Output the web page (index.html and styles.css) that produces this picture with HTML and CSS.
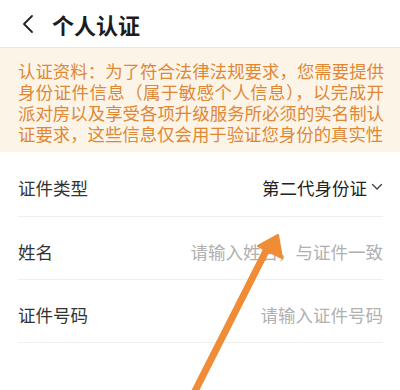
FILE: index.html
```html
<!DOCTYPE html>
<html lang="zh">
<head>
<meta charset="utf-8">
<link rel="stylesheet" href="styles.css">
</head>
<body>
<div class="page">
  <header class="topbar">
    <svg class="back" width="14" height="20" viewBox="0 0 14 20"><path d="M11 2 L3 10 L11 18" fill="none" stroke="#222" stroke-width="1.8" stroke-linecap="round" stroke-linejoin="round"/></svg>
    <h1 class="title">个人认证</h1>
  </header>
  <div class="notice">认证资料：为了符合法律法规要求，您需要提供身份证件信息（属于敏感个人信息），以完成开派对房以及享受各项升级服务所必须的实名制认证要求，这些信息仅会用于验证您身份的真实性</div>
  <div class="form">
    <div class="row">
      <span class="label">证件类型</span>
      <span class="value">第二代身份证<svg class="caret" width="12" height="8" viewBox="0 0 12 8"><path d="M1.5 1.5 L6 6 L10.5 1.5" fill="none" stroke="#444" stroke-width="1.4" stroke-linecap="round" stroke-linejoin="round"/></svg></span>
    </div>
    <div class="row">
      <span class="label">姓名</span>
      <span class="placeholder">请输入姓名，与证件一致</span>
    </div>
    <div class="row">
      <span class="label">证件号码</span>
      <span class="placeholder">请输入证件号码</span>
    </div>
  </div>
  <svg class="arrow" width="400" height="390" viewBox="0 0 400 390">
    <path d="M193 395 L268 247" stroke="#f08c36" stroke-width="7" stroke-linecap="round" fill="none"/>
    <path d="M278 235 L258 246 L282 258 Z" fill="#f08c36" stroke="#f08c36" stroke-width="2" stroke-linejoin="round"/>
  </svg>
</div>
</body>
</html>
```
FILE: styles.css
```css
html, body {
  margin: 0;
  padding: 0;
  background: #ffffff;
}
body {
  font-family: "Noto Sans CJK SC", "Noto Sans", sans-serif;
}
.page {
  position: relative;
  width: 400px;
  height: 390px;
  overflow: hidden;
}
.topbar {
  height: 48px;
  display: flex;
  align-items: center;
  padding-left: 21px;
  border-bottom: 1px solid #ede7df;
  box-sizing: border-box;
}
.back {
  display: block;
}
.title {
  margin: 0 0 0 17px;
  font-size: 22px;
  font-weight: 700;
  color: #1c1c1c;
  line-height: 1;
}
.notice {
  background: #fdf4e8;
  color: #de8836;
  font-size: 17.4px;
  line-height: 21px;
  padding: 12px 16px 8px 18px;
  text-align: justify;
}
.form {
  padding: 0 17px 0 18px;
}
.row {
  height: 63px;
  display: flex;
  align-items: center;
  justify-content: space-between;
  border-bottom: 1px solid #efefef;
  font-size: 17.5px;
  padding-top: 6px;
  box-sizing: border-box;
}
.row:first-child {
  height: 65px;
}
.label {
  color: #333333;
}
.value {
  color: #222222;
  display: flex;
  align-items: center;
}
.caret {
  margin-left: 4px;
}
.placeholder {
  color: #b0b0b0;
}
.arrow {
  position: absolute;
  left: 0;
  top: 0;
  pointer-events: none;
}
```
